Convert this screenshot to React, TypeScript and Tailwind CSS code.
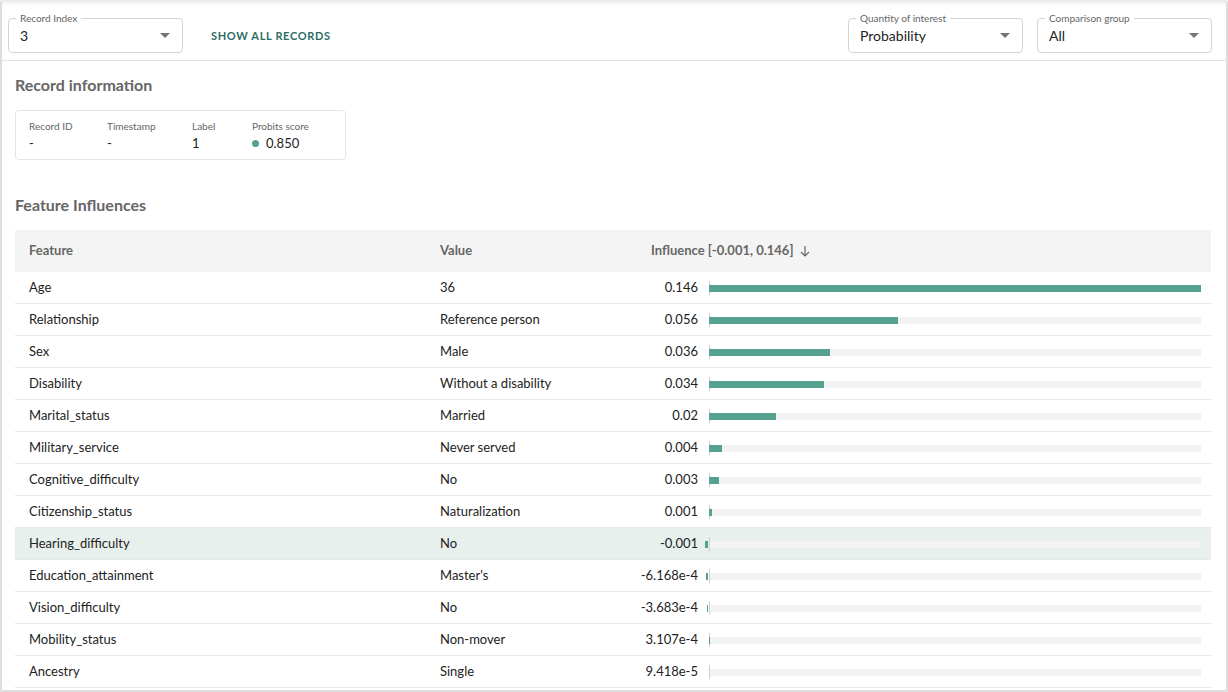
import React from "react";

const rows = [
  { feature: "Age", value: "36", label: "0.146", v: 0.146 },
  { feature: "Relationship", value: "Reference person", label: "0.056", v: 0.056 },
  { feature: "Sex", value: "Male", label: "0.036", v: 0.036 },
  { feature: "Disability", value: "Without a disability", label: "0.034", v: 0.034 },
  { feature: "Marital_status", value: "Married", label: "0.02", v: 0.02 },
  { feature: "Military_service", value: "Never served", label: "0.004", v: 0.004 },
  { feature: "Cognitive_difficulty", value: "No", label: "0.003", v: 0.003 },
  { feature: "Citizenship_status", value: "Naturalization", label: "0.001", v: 0.001 },
  { feature: "Hearing_difficulty", value: "No", label: "-0.001", v: -0.001, active: true },
  { feature: "Education_attainment", value: "Master's", label: "-6.168e-4", v: -0.0006168 },
  { feature: "Vision_difficulty", value: "No", label: "-3.683e-4", v: -0.0003683 },
  { feature: "Mobility_status", value: "Non-mover", label: "3.107e-4", v: 0.0003107 },
  { feature: "Ancestry", value: "Single", label: "9.418e-5", v: 0.00009418 },
];

const MAX = 0.146;
const TRACK = 492;

function Select({ label, value, width }: { label: string; value: string; width: string }) {
  return (
    <div className={`relative h-[35px] ${width} rounded-[4px] border border-[#d4d4d4] flex items-center pl-[11px] pr-[12px]`}>
      <span className="absolute -top-[7px] left-[7px] bg-white px-[4px] text-[10px] leading-[12px] text-[#666]">
        {label}
      </span>
      <span className="flex-1 text-[14px] text-[#222]">{value}</span>
      <svg width="10" height="5" viewBox="0 0 10 5">
        <path d="M0 0 L10 0 L5 5 Z" fill="#757575" />
      </svg>
    </div>
  );
}

function Bar({ v }: { v: number }) {
  const w = Math.max((Math.abs(v) / MAX) * TRACK, v !== 0 ? 1 : 0);
  const small = Math.abs(v) < 0.0002;
  return (
    <div className="relative h-[14px] w-[492px]">
      <div className="absolute left-0 top-[4px] h-[7px] w-full bg-[#f3f3f3]" />
      <div className="absolute left-0 top-0 h-[14px] w-px bg-[#cfcfcf]" />
      {!small && v > 0 && (
        <div className="absolute left-0 top-[4px] h-[7px] bg-[#55a08f]" style={{ width: w }} />
      )}
      {!small && v < 0 && (
        <div className="absolute top-[4px] h-[7px] bg-[#55a08f]" style={{ width: w, left: -w - 1 }} />
      )}
    </div>
  );
}

export default function App() {
  return (
    <div
      className="w-[1228px] h-[692px] overflow-hidden bg-white text-[#222] border-2 border-[#dedede] border-t-[#ececec] rounded-[2px]"
      style={{ fontFamily: "Lato, 'Noto Sans', sans-serif" }}
    >
      <header className="flex items-start gap-[28px] border-b border-[#e2e2e2] pl-[6px] pr-[14px] pt-[16px] pb-[7px] shadow-[inset_0_4px_4px_-2px_rgba(0,0,0,0.06)]">
        <Select label="Record Index" value="3" width="w-[175px]" />
        <button className="h-[35px] pt-[2px] text-[11px] font-bold tracking-[0.06em] text-[#2d6d64]">SHOW ALL RECORDS</button>
        <div className="flex-1" />
        <div className="flex gap-[14px]">
          <Select label="Quantity of interest" value="Probability" width="w-[175px]" />
          <Select label="Comparison group" value="All" width="w-[175px]" />
        </div>
      </header>

      <main className="pl-[13px] pr-[14px]">
        <h2 className="mt-[14px] text-[16px] font-bold leading-[20px] text-[#666]">Record information</h2>
        <div className="mt-[15px] flex h-[50px] w-[331px] items-start rounded-[4px] border border-[#e4e4e4] pl-[13px] pt-[8px]">
          {[
            ["Record ID", "-", "w-[78px]"],
            ["Timestamp", "-", "w-[85px]"],
            ["Label", "1", "w-[60px]"],
          ].map(([l, v, w]) => (
            <div key={l} className={`flex flex-col ${w}`}>
              <span className="text-[10px] leading-[14px] text-[#666]">{l}</span>
              <span className="mt-[2px] text-[13px] leading-[16px]">{v}</span>
            </div>
          ))}
          <div className="flex flex-col">
            <span className="text-[10px] leading-[14px] text-[#666]">Probits score</span>
            <span className="mt-[2px] flex items-center gap-[7px] text-[13px] leading-[16px]">
              <span className="h-[7px] w-[7px] rounded-full bg-[#55a08f]" />
              0.850
            </span>
          </div>
        </div>

        <h2 className="mt-[35px] text-[16px] font-bold leading-[20px] text-[#666]">Feature Influences</h2>

        <div className="mt-[15px] w-[1196px]">
          <div className="grid h-[42px] grid-cols-[411px_211px_1fr] items-center bg-[#f4f4f4] text-[13px] font-bold text-[#666]">
            <div className="pl-[14px]">Feature</div>
            <div className="pl-[14px]">Value</div>
            <div className="flex items-center gap-[6px] pl-[14px]">
              Influence [-0.001, 0.146]
              <svg width="12" height="12" viewBox="0 0 12 12" fill="none" stroke="#666" strokeWidth="1.2">
                <path d="M6 1 V11 M2 7 L6 11 L10 7" />
              </svg>
            </div>
          </div>
          {rows.map((r) => (
            <div
              key={r.feature}
              className={`grid h-[32px] grid-cols-[411px_211px_1fr] items-center border-b border-[#e8e8e8] text-[13px] ${
                r.active ? "bg-[#e8f0ee]" : "bg-white"
              }`}
            >
              <div className="pl-[14px]">{r.feature}</div>
              <div className="pl-[14px]">{r.value}</div>
              <div className="flex items-center">
                <div className="w-[61px] text-right">{r.label}</div>
                <div className="ml-[11px]">
                  <Bar v={r.v} />
                </div>
              </div>
            </div>
          ))}
        </div>
      </main>
    </div>
  );
}
